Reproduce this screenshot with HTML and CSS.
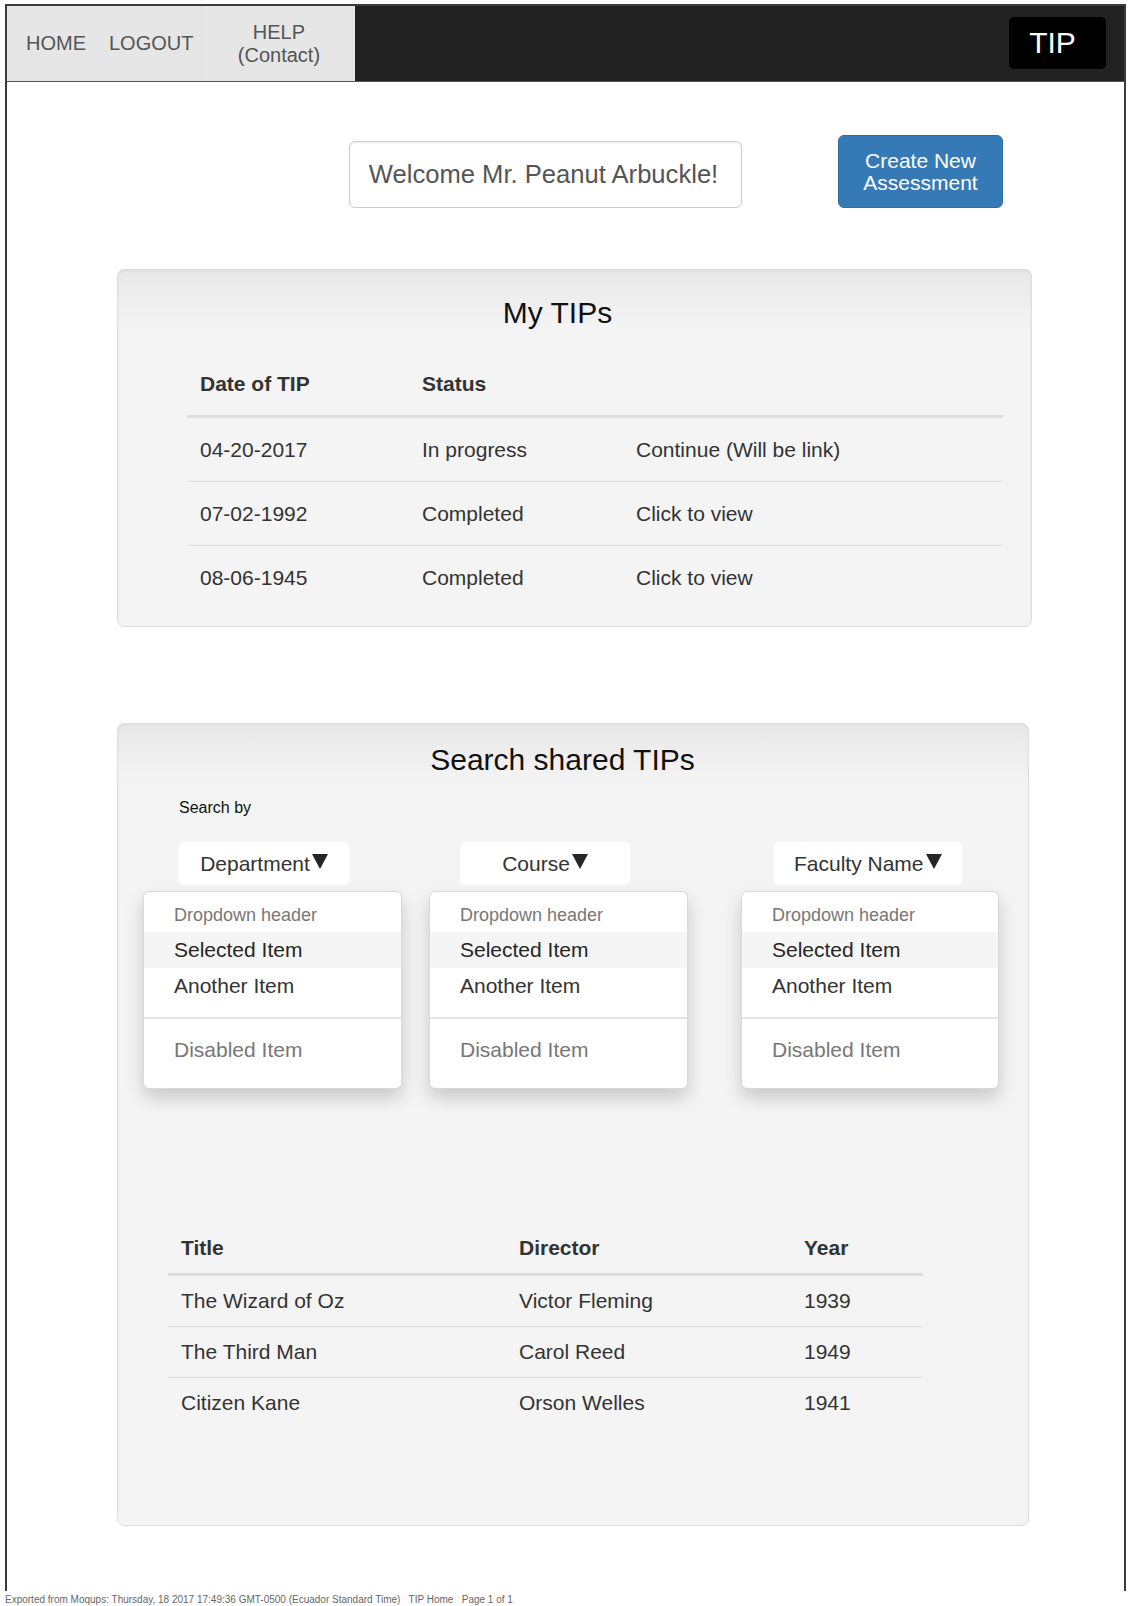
FILE: index.html
```html
<!DOCTYPE html>
<html lang="en">
<head>
<meta charset="utf-8">
<title>TIP – Home</title>
<link rel="stylesheet" href="styles.css">
</head>
<body>
<div class="frame">
  <header class="topbar">
    <nav class="nav-links">
      <a class="nav-item nav-home" href="#">HOME</a>
      <a class="nav-item nav-logout" href="#">LOGOUT</a>
      <a class="nav-item nav-help" href="#">HELP<br>(Contact)</a>
    </nav>
    <div class="brand">TIP</div>
  </header>

  <main class="content">
    <div class="welcome-row">
      <div class="welcome">Welcome Mr. Peanut Arbuckle!</div>
      <button class="btn-create" type="button">Create New<br>Assessment</button>
    </div>

    <section class="panel panel-tips">
      <h2 class="panel-title title-tips">My TIPs</h2>
      <table class="tbl tbl-tips">
        <thead>
          <tr>
            <th class="tc1">Date of TIP</th>
            <th class="tc2">Status</th>
            <th class="tc3"></th>
          </tr>
        </thead>
        <tbody>
          <tr><td>04-20-2017</td><td>In progress</td><td>Continue (Will be link)</td></tr>
          <tr><td>07-02-1992</td><td>Completed</td><td>Click to view</td></tr>
          <tr><td>08-06-1945</td><td>Completed</td><td>Click to view</td></tr>
        </tbody>
      </table>
    </section>

    <section class="panel panel-search">
      <h2 class="panel-title title-search">Search shared TIPs</h2>
      <div class="search-label">Search by</div>
      <div class="filters">
        <div class="filter filter-dept">
          <div class="toggle">Department<span class="caret"></span></div>
          <ul class="menu">
            <li class="menu-header">Dropdown header</li>
            <li class="menu-item active">Selected Item</li>
            <li class="menu-item">Another Item</li>
            <li class="divider"></li>
            <li class="menu-item disabled">Disabled Item</li>
          </ul>
        </div>
        <div class="filter filter-course">
          <div class="toggle">Course<span class="caret"></span></div>
          <ul class="menu">
            <li class="menu-header">Dropdown header</li>
            <li class="menu-item active">Selected Item</li>
            <li class="menu-item">Another Item</li>
            <li class="divider"></li>
            <li class="menu-item disabled">Disabled Item</li>
          </ul>
        </div>
        <div class="filter filter-faculty">
          <div class="toggle">Faculty Name<span class="caret"></span></div>
          <ul class="menu">
            <li class="menu-header">Dropdown header</li>
            <li class="menu-item active">Selected Item</li>
            <li class="menu-item">Another Item</li>
            <li class="divider"></li>
            <li class="menu-item disabled">Disabled Item</li>
          </ul>
        </div>
      </div>

      <table class="tbl tbl-films">
        <thead>
          <tr>
            <th class="fc1">Title</th>
            <th class="fc2">Director</th>
            <th class="fc3">Year</th>
          </tr>
        </thead>
        <tbody>
          <tr><td>The Wizard of Oz</td><td>Victor Fleming</td><td>1939</td></tr>
          <tr><td>The Third Man</td><td>Carol Reed</td><td>1949</td></tr>
          <tr><td>Citizen Kane</td><td>Orson Welles</td><td>1941</td></tr>
        </tbody>
      </table>
    </section>
  </main>
</div>
<footer class="print-footer">Exported from Moqups: Thursday, 18 2017 17:49:36 GMT-0500 (Ecuador Standard Time) &nbsp; TIP Home &nbsp; Page 1 of 1</footer>
</body>
</html>
```

FILE: styles.css
```css
* {
  box-sizing: border-box;
}

html, body {
  overflow: hidden;
}

body {
  margin: 0;
  background: #fff;
  color: #333;
  font-family: "Liberation Sans", Arial, Helvetica, sans-serif;
}

/* ---------- outer frame ---------- */
.frame {
  margin: 4px 0 0 5px;
  width: 1121px;
  height: 1587px;
  border: 2px solid #3c3c3c;
  border-bottom: 0;
}

/* ---------- top bar ---------- */
.topbar {
  display: flex;
  height: 76px;
  background: #222;
  border-bottom: 1px solid #555;
}

.nav-links {
  display: flex;
  width: 348px;
  background: #e6e6e6;
}

.nav-item {
  display: flex;
  align-items: center;
  font-size: 20px;
  color: #555;
  text-decoration: none;
}

.nav-home {
  padding: 0 11px 0 19px;
}

.nav-logout {
  padding: 0 8px 0 12px;
}

.nav-help {
  width: 150px;
  justify-content: center;
  text-align: center;
  line-height: 23px;
  padding-left: 4px;
  border-left: 1px solid #dedede;
}

.brand {
  margin: 11px 18px 0 auto;
  width: 97px;
  height: 52px;
  padding-right: 10px;
  display: flex;
  align-items: center;
  justify-content: center;
  background: #000;
  color: #fff;
  border-radius: 5px;
  font-size: 30px;
}

/* ---------- welcome row ---------- */
.content {
  padding-top: 53px;
}

.welcome-row {
  display: flex;
  align-items: flex-end;
  padding-left: 342px;
}

.welcome {
  width: 393px;
  height: 67px;
  display: flex;
  align-items: center;
  justify-content: center;
  padding-right: 4px;
  border: 1px solid #ccc;
  border-radius: 6px;
  box-shadow: inset 0 1px 2px rgba(0, 0, 0, 0.075);
  font-size: 25.6px;
  color: #555;
}

.btn-create {
  margin-left: 96px;
  width: 165px;
  height: 73px;
  padding: 0;
  background: #357ab7;
  border: 1px solid #2e6da4;
  border-radius: 6px;
  color: #fff;
  font-family: "Liberation Sans", Arial, Helvetica, sans-serif;
  font-size: 21px;
  line-height: 22px;
}

/* ---------- panels ---------- */
.panel {
  margin-left: 110px;
  background: #f4f4f4 linear-gradient(#e8e8e8, #f4f4f4 60px) no-repeat;
  border: 1px solid #dedede;
  border-radius: 7px;
  box-shadow: inset 0 1px 3px rgba(0, 0, 0, 0.05);
}

.panel-tips {
  width: 915px;
  margin-top: 61px;
  padding: 26px 0 17px;
}

.panel-search {
  width: 912px;
  margin-top: 96px;
  padding: 19px 0 97px;
}

.panel-title {
  margin: 0;
  font-size: 30px;
  font-weight: normal;
  line-height: 34px;
  color: #111;
  text-align: center;
}

.title-tips {
  padding-right: 34px;
}

.title-search {
  padding-right: 21px;
}

/* ---------- tables ---------- */
.tbl {
  border-collapse: separate;
  border-spacing: 0;
  table-layout: fixed;
  font-size: 21px;
  color: #333;
}

.tbl th {
  text-align: left;
  font-weight: bold;
  border-bottom: 2px solid #ddd;
}

.tbl td {
  border-top: 1px solid #ddd;
}

.tbl-tips {
  margin: 21px 0 0 69px;
  width: 816px;
}

.tbl-tips th {
  padding: 17px 13px 16px;
  line-height: 31px;
}

.tbl-tips td {
  padding: 16px 13px;
  line-height: 31px;
}

.tc1 { width: 222px; }
.tc2 { width: 214px; }

.tbl-films {
  margin: 134px 0 0 50px;
  width: 755px;
}

.tbl-films th,
.tbl-films td {
  padding: 10px 13px;
  line-height: 30px;
}

.fc1 { width: 338px; }
.fc2 { width: 285px; }

/* ---------- search filters ---------- */
.search-label {
  margin: 21px 0 0 61px;
  font-size: 16px;
  line-height: 20px;
  color: #111;
}

.filters {
  display: flex;
  align-items: flex-start;
  margin-top: 24px;
  padding-left: 25px;
}

.filter {
  display: flex;
  flex-direction: column;
  align-items: flex-start;
}

.filter-course { margin-left: 27px; }
.filter-faculty { margin-left: 53px; }

.filter-dept .toggle { margin-left: 36px; }
.filter-course .toggle { margin-left: 31px; }
.filter-faculty .toggle { margin-left: 33px; }

.toggle {
  min-width: 170px;
  height: 43px;
  padding: 0 20px;
  background: #fff;
  border-radius: 5px;
  font-size: 21px;
  line-height: 43px;
  color: #333;
  text-align: center;
  white-space: nowrap;
}

.caret {
  display: inline-block;
  width: 0;
  height: 0;
  margin-left: 2px;
  border-left: 8px solid transparent;
  border-right: 8px solid transparent;
  border-top: 15px solid #262626;
  vertical-align: 2px;
}

.menu {
  list-style: none;
  margin: 6px 0 0;
  padding: 7px 0 20px;
  width: 259px;
  background: #fff;
  border: 1px solid rgba(0, 0, 0, 0.15);
  border-radius: 6px;
  box-shadow: 0 9px 18px rgba(0, 0, 0, 0.175);
}

.filter-faculty .menu {
  width: 258px;
}

.menu-header {
  padding: 4px 30px;
  font-size: 18px;
  line-height: 25px;
  color: #777;
}

.menu-item {
  padding: 3px 30px;
  font-size: 21px;
  line-height: 30px;
  color: #333;
}

.menu-item.active {
  background: #f5f5f5;
  color: #262626;
}

.menu-item.disabled {
  color: #777;
}

.divider {
  height: 2px;
  margin: 13px 0;
  background: #e5e5e5;
}

/* ---------- print footer ---------- */
.print-footer {
  margin: 3px 0 0 5px;
  font-size: 10px;
  line-height: 11px;
  color: #666;
  white-space: nowrap;
}
```
